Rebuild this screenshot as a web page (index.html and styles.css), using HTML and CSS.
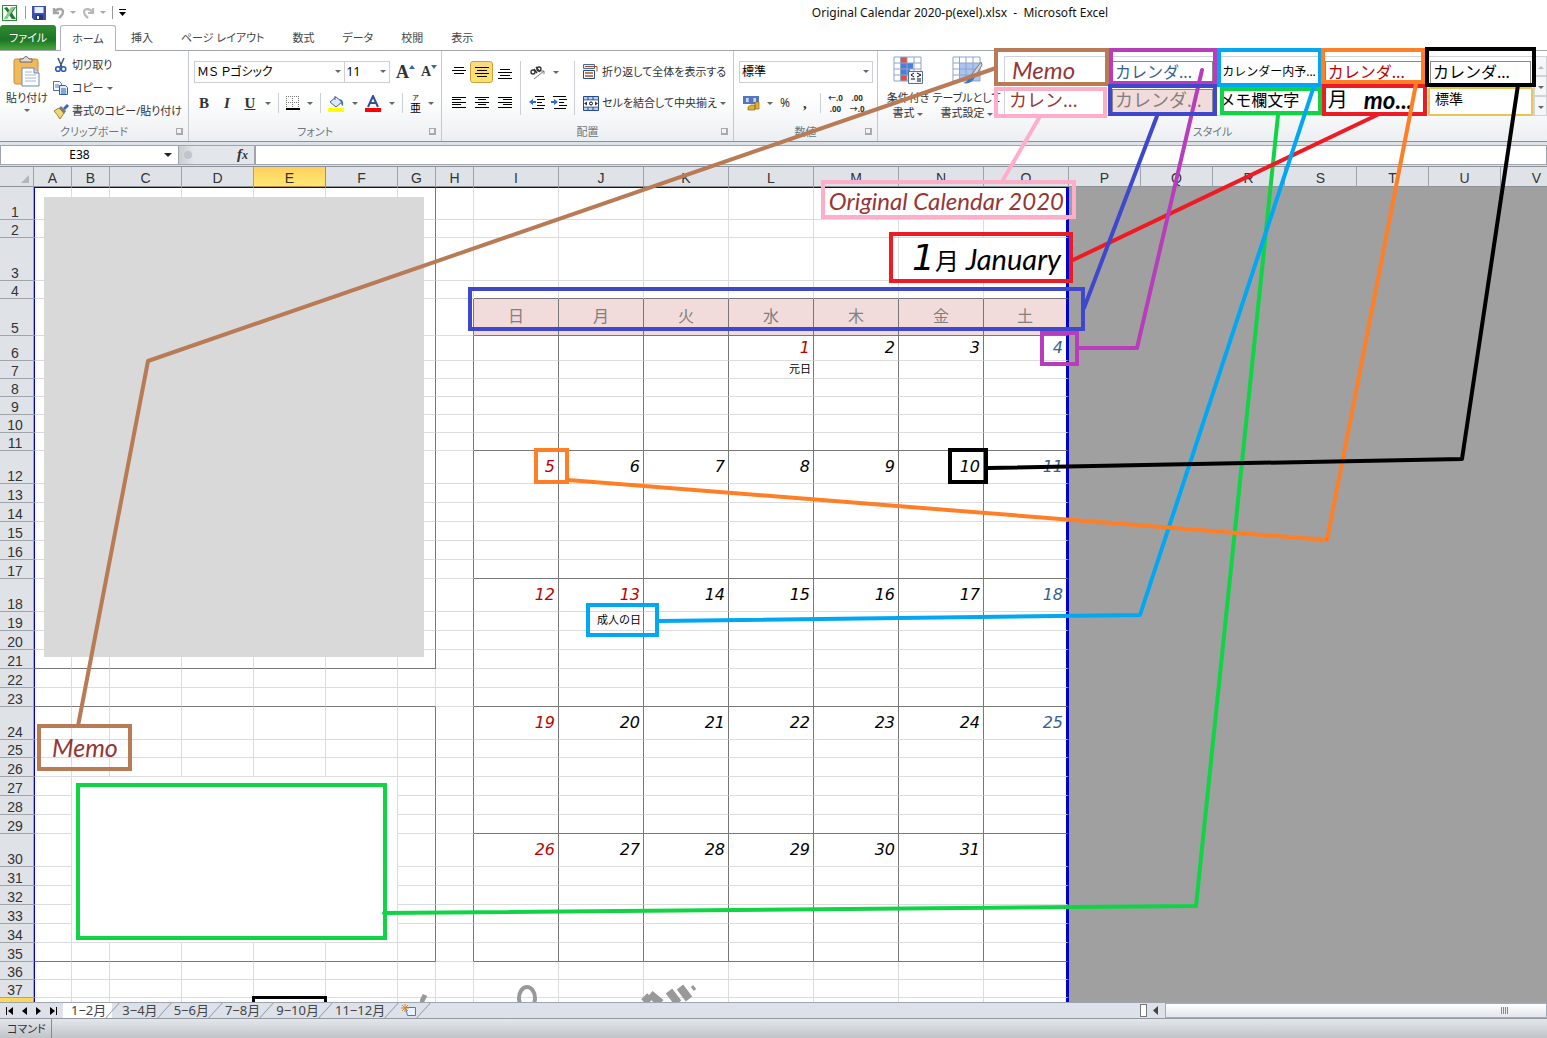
FILE: index.html
```html
<!DOCTYPE html>
<html lang="ja">
<head>
<meta charset="utf-8">
<title>Original Calendar 2020-p(exel).xlsx - Microsoft Excel</title>
<link rel="stylesheet" href="styles.css">
</head>
<body>
<header class="titlebar">
  <div class="quick">
    <svg width="18" height="18" viewBox="0 0 18 18"><rect x="1.500" y="1.500" width="14" height="15" fill="#fff" stroke="#2a8a38"/><path d="M3 4l3-1 3 4 3-4h3l-4 6 4 6h-4l-3-4-2 4H3l4-6z" fill="#217a32"/><path d="M10 3h4L6 15H3z" fill="#8cc98c"/></svg>
    <i class="vline"></i>
    <button class="bare" aria-label="上書き保存"><svg width="14" height="14" viewBox="0 0 14 14"><path d="M0 0h14v14H2l-2-2z" fill="#3c4fb0"/><path d="M2.500 1h9v6h-9z" fill="#e8f0ff"/><path d="M4 9h7v5H4z" fill="#29336f"/><path d="M5 10h2v3H5z" fill="#fff"/></svg></button>
    <button class="bare" aria-label="元に戻す"><svg width="13" height="12" viewBox="0 0 13 12"><path d="M2 1v5h5M2.500 5.500C5 1 11 1 11 5c0 3-2 4-4 6" fill="none" stroke="#a5a5a5" stroke-width="2.400"/></svg><b class="dn pale"></b></button>
    <button class="bare" aria-label="やり直し"><svg width="13" height="12" viewBox="0 0 13 12"><path d="M11 1v5H6M10.500 5.500C8 1 2 1 2 5c0 3 2 4 4 6" fill="none" stroke="#b8b8b8" stroke-width="2.200"/></svg><b class="dn pale"></b></button>
    <i class="vline"></i>
    <button class="bare" aria-label="カスタマイズ"><svg width="7" height="7" viewBox="0 0 7 7"><path d="M0 0h7v1H0zM0 3h7L3.500 7z"/></svg></button>
  </div>
  <h1>Original Calendar 2020-p(exel).xlsx&nbsp; -&nbsp; Microsoft Excel</h1>
</header>

<nav class="tabs">
  <button class="file">ファイル</button>
  <button class="active">ホーム</button>
  <button>挿入</button>
  <button>ページ レイアウト</button>
  <button>数式</button>
  <button>データ</button>
  <button>校閲</button>
  <button>表示</button>
</nav>

<main class="ribbon">
  <section class="group g-clip">
    <div class="body clip">
      <button class="bare big"><svg width="28" height="31" viewBox="0 0 28 31"><rect x="1" y="3" width="24" height="25" rx="2" fill="#f0b95c" stroke="#c98d35"/><path d="M7 6V3h3q3-5 6 0h3v3z" fill="#ddd" stroke="#666"/><path d="M9 12h12l5 5v13H9z" fill="#fff" stroke="#6d87ad"/><path d="M21 12v5h5" fill="#c9daf0" stroke="#6d87ad"/><path d="M12 16h7M12 19h11M12 22h11M12 25h11" stroke="#9db8dc"/></svg><span>貼り付け</span><b class="dn"></b></button>
      <div class="stack">
        <button class="bare"><svg width="16" height="16" viewBox="0 0 16 16"><path d="M5 1l4 9M11 1L7 10" stroke="#44556f" stroke-width="1.500"/><circle cx="5" cy="12" r="2.300" fill="none" stroke="#2b5bb8" stroke-width="1.600"/><circle cx="10.500" cy="12" r="2.300" fill="none" stroke="#2b5bb8" stroke-width="1.600"/></svg>切り取り</button>
        <button class="bare"><svg width="16" height="14" viewBox="0 0 16 14"><path d="M.5.5h6l2 2v7h-8z" fill="#fff" stroke="#4a73b0"/><path d="M2 4h4M2 6h4" stroke="#4a73b0"/><path d="M6.500 4.500h6l2 2v7h-8z" fill="#e3eeff" stroke="#2d5da8"/><path d="M8 8h5M8 10h5M8 12h5" stroke="#2d5da8"/></svg>コピー <b class="dn"></b></button>
        <button class="bare"><svg width="16" height="15" viewBox="0 0 16 15"><path d="M1 7l5-3 5 5-4 6q-3-5-6-8z" fill="#f1d877" stroke="#a0812b"/><path d="M6 4l2-2 5 5-2 3z" fill="#7b7b86"/><path d="M10 4l4-4 2 2-4 4z" fill="#3566b8"/></svg>書式のコピー/貼り付け</button>
      </div>
    </div>
    <footer>クリップボード<i class="launch"></i></footer>
  </section>

  <section class="group g-font">
    <div class="body">
      <div class="line">
        <span class="combo wide"><select aria-label="フォント名"><option>ＭＳ Ｐゴシック</option></select></span><span class="combo tiny"><select aria-label="サイズ"><option>11</option></select></span>
        <button class="bare serif s18">A<svg width="6" height="14" viewBox="0 0 6 14"><path d="M0 4h6L3 0z" fill="#3767b0"/></svg></button>
        <button class="bare serif s14">A<svg width="6" height="14" viewBox="0 0 6 14"><path d="M0 0h6L3 4z" fill="#3767b0"/></svg></button>
      </div>
      <div class="line l2">
        <button class="bare serif bold">B</button><button class="bare serif ital">I</button><button class="bare serif under">U</button><b class="dn"></b><i class="sep"></i>
        <button class="bare" aria-label="罫線"><svg width="14" height="14" viewBox="0 0 14 14"><path d="M.5 0v13M6.500 0v13M12.500 0v13M0 .5h13M0 6.500h13" stroke="#777" stroke-dasharray="1 1"/><path d="M0 13h14" stroke="#000" stroke-width="2"/></svg></button><b class="dn"></b><i class="sep"></i>
        <button class="bare" aria-label="塗りつぶし"><svg width="17" height="17" viewBox="0 0 17 17"><path d="M2 7l6-5 6 5-6 5z" fill="#dce8fa" stroke="#44618e"/><path d="M7 5V1" stroke="#44618e"/><path d="M11 4q5 0 4 7-2-1-2-4z" fill="#3a6fc0"/><path d="M0 13h16v4H0z" fill="#ff0"/></svg></button><b class="dn"></b>
        <button class="bare" aria-label="フォントの色"><svg width="17" height="17" viewBox="0 0 17 17"><path d="M3 12L8 1l5 11M5 8h6" fill="none" stroke="#31528f" stroke-width="2"/><path d="M0 13h16v4H0z" fill="red"/></svg></button><b class="dn"></b><i class="sep"></i>
        <button class="bare ruby"><small>ア</small><span>亜</span></button><b class="dn"></b>
      </div>
    </div>
    <footer>フォント<i class="launch"></i></footer>
  </section>

  <section class="group g-align">
    <div class="body cols">
      <div class="agrid">
        <button class="bare" aria-label="上揃え"><svg width="14" height="14"><path d="M0 .5h14M2 3.500h10M0 6.500h14M2 9.500h10" stroke="#000" transform="translate(0 -1)"/></svg></button>
        <button class="bare on" aria-label="上下中央揃え"><svg width="14" height="14"><path d="M0 3.500h14M2 6.500h10M0 9.500h14M2 12.500h10" stroke="#000" transform="translate(0 -1)"/></svg></button>
        <button class="bare" aria-label="下揃え"><svg width="14" height="14"><path d="M2 4.500h10M0 7.500h14M2 10.500h10M0 13.500h14" stroke="#000"/></svg></button>
        <button class="bare" aria-label="左揃え"><svg width="14" height="12"><path d="M0 .5h14M0 2.500h9M0 5.500h14M0 7.500h9M0 10.500h14" stroke="#000"/></svg></button>
        <button class="bare" aria-label="中央揃え"><svg width="14" height="12"><path d="M0 .5h14M3 2.500h8M0 5.500h14M3 7.500h8M0 10.500h14" stroke="#000"/></svg></button>
        <button class="bare" aria-label="右揃え"><svg width="14" height="12"><path d="M0 .5h14M5 2.500h9M0 5.500h14M5 7.500h9M0 10.500h14" stroke="#000"/></svg></button>
      </div>
      <i class="sep tall"></i>
      <div class="orient">
        <div><button class="bare" aria-label="方向"><svg width="18" height="16" viewBox="0 0 18 16"><g fill="none" stroke="#333" stroke-width="1.400"><circle cx="4" cy="8" r="2"/><path d="M5 5l3 4M7 3l4 5"/><circle cx="10" cy="5" r="2"/></g><path d="M5 15l10-8M12 7h3v3" fill="none" stroke="#777"/></svg></button><b class="dn"></b></div>
        <div><button class="bare" aria-label="インデント解除"><svg width="16" height="14"><path d="M6 .5h9M8 3.500h8M8 6.500h5M8 9.500h8M3 12.500h12" stroke="#000"/><path d="M0 6l4-3v2h3v2H4v2z" fill="#2f6bd0"/></svg></button><button class="bare" aria-label="インデント"><svg width="16" height="14"><path d="M2 .5h13M8 3.500h8M8 6.500h5M8 9.500h8M3 12.500h12" stroke="#000"/><path d="M7 6L3 3v2H0v2h3v2z" fill="#2f6bd0"/></svg></button></div>
      </div>
      <i class="sep tall"></i>
      <div class="wrapcol">
        <button class="bare"><svg width="16" height="16" viewBox="0 0 16 16"><path d="M.5.5h11v4H.5z" fill="#f7e5d2" stroke="#4869a0"/><path d="M2 2.500h12v5" fill="none" stroke="#8b5a2b"/><path d="M.5 6.500h11v8H.5z" fill="#fff" stroke="#27488a"/><path d="M2 9h8M2 12h8" stroke="#a5552a" stroke-width="1.500"/></svg>折り返して全体を表示する</button>
        <button class="bare"><svg width="16" height="15" viewBox="0 0 16 15"><path d="M.5.500h15v14H.500zM.5 4h15M.5 11h15M5 0v4M10 0v4M5 11v4M10 11v4" fill="#b9cfee" stroke="#27488a"/><path d="M1 4.500h14v6H1z" fill="#fff"/><path d="M1 7.500l3-2v4zM15 7.500l-3-2v4z" fill="#333"/><circle cx="8" cy="7.500" r="1.500" fill="none" stroke="#000"/></svg>セルを結合して中央揃え <b class="dn"></b></button>
      </div>
    </div>
    <footer>配置<i class="launch"></i></footer>
  </section>

  <section class="group g-num">
    <div class="body">
      <div class="line"><span class="combo full"><select aria-label="表示形式"><option>標準</option></select></span></div>
      <div class="line l2">
        <button class="bare" aria-label="通貨"><svg width="17" height="16" viewBox="0 0 17 16"><path d="M0 1h16v8H0z" fill="#5476bd"/><path d="M3 3h10v4H3z" fill="#c9d8f5"/><ellipse cx="8" cy="5" rx="2.500" ry="3" fill="#5476bd"/><path d="M8 10h4v5H5v-3zM12 7h4v7h-4z" fill="#e3af32" stroke="#94691a" stroke-width=".7"/></svg></button><b class="dn"></b>
        <button class="bare pct">%</button><button class="bare serif comma">,</button><i class="sep"></i>
        <button class="bare dec">←.0<br>.00</button><button class="bare dec">.00<br>→.0</button>
      </div>
    </div>
    <footer>数値<i class="launch"></i></footer>
  </section>

  <section class="group g-style">
    <div class="body styles">
      <button class="bare big cond"><svg width="31" height="29" viewBox="0 0 31 29"><path d="M1 1h27v24H1z" fill="#fff"/><path d="M7 1h7v6H7zM7 19h7v6H7z" fill="#e8503e"/><path d="M7 7h13v6H7zM7 13h10v6H7z" fill="#4a7fdc"/><path d="M1 1h27v24H1zM1 7h27M1 13h27M1 19h27M7.500 1v24M14 1v24M21 1v24" fill="none" stroke="#8fa3c8"/><path d="M15.500 15.500h14v12h-14z" fill="#f3f6fb" stroke="#55709c"/><path d="M21 17l-3 2 3 2M18 23h4M24 17l4 2-4 2M24 25h4M24 23h4" fill="none" stroke="#111"/></svg><span>条件付き<br>書式 <b class="dn"></b></span></button>
      <button class="bare big tbl"><svg width="31" height="29" viewBox="0 0 31 29"><path d="M1 1h27v24H1z" fill="#fff"/><path d="M7 7h21v18H7z" fill="#a9c5f2"/><path d="M1 1h27v24H1zM1 7h27M1 13h27M1 19h27M7.500 1v24M14 1v24M21 1v24" fill="none" stroke="#8fa3c8"/><path d="M29 6l-9 12 3 3 7-12z" fill="#d3d8df" stroke="#777"/><path d="M20 18l3 3q-4 8-12 6 5-1 5-5 1-3 4-4z" fill="#3c74c4"/></svg><span>テーブルとして<br>書式設定 <b class="dn"></b></span></button>
      <div class="gallery">
        <button class="hand wine">Memo</button><button class="steel boxed s16">カレンダ...</button><button class="s12">カレンダー内予...</button><button class="red boxed s16">カレンダ...</button><button class="boxed s16">カレンダ...</button>
        <button class="wine s18">カレン...</button><button class="pinkcell boxed s18">カレンダ...</button><button class="s16">メモ欄文字</button><button class="month"><span>月</span><em>mo...</em></button><button class="picked s14">標準</button>
      </div>
      <div class="gscroll"><button aria-label="上へ"><b class="up"></b></button><button aria-label="下へ"><b class="dn"></b></button><button aria-label="その他"><b class="dn"></b></button></div>
    </div>
    <footer>スタイル</footer>
  </section>
</main>

<div class="formula">
  <input class="namebox" aria-label="名前ボックス" value="E38">
  <b class="dn dark"></b>
  <div class="fx"><i></i><em>f<small>x</small></em></div>
  <input class="expr" aria-label="数式バー">
</div>

<div class="sheet">
  <table id="grid"></table>
  <div class="photo"></div>
  <div class="memo">Memo</div>
  <div class="cursor"></div>
  <svg class="mark" width="300" height="20" viewBox="0 0 300 20"><g fill="none" stroke="#999"><ellipse cx="107" cy="14" rx="8" ry="11" stroke-width="4"/><path d="M224 18l6-6M230 10l11 9" stroke-width="8"/><path d="M249 7l9 12M260 3l9 12" stroke-width="8"/><path d="M272 2l3 4" stroke-width="3"/><path d="M1 19l4-8" stroke-width="5"/></g></svg>
</div>

<nav class="sheetbar">
  <div class="nav">
    <button class="bare" aria-label="先頭"><svg width="7" height="8"><path d="M0 0h1v8H0zM7 0v8L2 4z"/></svg></button>
    <button class="bare" aria-label="前"><svg width="5" height="8"><path d="M5 0v8L0 4z"/></svg></button>
    <button class="bare" aria-label="次"><svg width="5" height="8"><path d="M0 0v8l5-4z"/></svg></button>
    <button class="bare" aria-label="末尾"><svg width="7" height="8"><path d="M6 0h1v8H6zM0 0v8l5-4z"/></svg></button>
  </div>
  <button class="st current">1−2月</button><button class="st">3−4月</button><button class="st">5−6月</button><button class="st">7−8月</button><button class="st">9−10月</button><button class="st">11−12月</button>
  <button class="st" aria-label="ワークシートの挿入"><svg width="16" height="13" viewBox="0 0 16 13"><path d="M4.500 3.500h10v8h-8z" fill="#eaf1ff" stroke="#5577b5"/><path d="M4 0v8M0 4h8M1 1l6 6M7 1L1 7" stroke="#d38a26"/></svg></button>
  <span class="endline"></span>
  <div class="hscroll"><i class="split"></i><button class="bare" aria-label="左へ"><svg width="5" height="9"><path d="M5 0v9L0 4.500z" fill="#444"/></svg></button><div class="thumb"><i></i></div></div>
</nav>
<footer class="status"><span>コマンド</span></footer>

<svg class="notes" width="1547" height="1038" viewBox="0 0 1547 1038">
  <g class="green"><path d="M1278 115L1196 906L384 913"/><rect x="1222" y="89" width="98" height="24"/><rect x="78" y="785" width="307" height="153"/></g>
  <g class="brown"><path d="M996 68L148 361L78 726"/><rect x="996" y="50" width="111" height="34"/><rect x="39" y="726" width="91" height="43"/></g>
  <g class="pink"><path d="M1039 118L1003 180"/><rect x="996" y="89" width="109" height="27"/><rect x="823" y="182" width="251" height="35"/></g>
  <g class="crimson"><path d="M1377 115L1073 260"/><rect x="1324" y="86" width="101" height="28"/><rect x="891" y="234" width="180" height="47"/></g>
  <g class="cyan"><path d="M1314 86L1140 615L659 621"/><rect x="1219" y="50" width="101" height="35"/><rect x="588" y="605" width="69" height="30"/></g>
  <g class="purple"><path d="M1202 70L1137 348H1079"/><rect x="1111" y="50" width="104" height="33"/><rect x="1042" y="333" width="35" height="31"/></g>
  <g class="blue"><path d="M1157 116L1084 308"/><rect x="1110" y="86" width="105" height="28"/><rect x="470" y="289" width="613" height="40"/></g>
  <g class="orange"><path d="M1416 84L1327 540L568 480"/><rect x="1323" y="50" width="100" height="32"/><rect x="536" y="450" width="31" height="32"/></g>
  <g class="black"><path d="M1518 85L1462 459L988 468"/><rect x="1427" y="49" width="107" height="36"/><rect x="950" y="450" width="36" height="32"/></g>
</svg>
<script src="script.js"></script>
</body>
</html>
```
FILE: styles.css
```css
* { box-sizing: border-box; }
body {
  margin: 0; min-height: 100vh; display: flex; flex-direction: column; position: relative;
  height: 100vh; overflow: hidden; background: #fff; color: #333;
  font: 12px/16px "Noto Sans", "Noto Sans CJK JP", sans-serif;
}
button, input, select { font: inherit; color: inherit; }
button { font-feature-settings: "palt"; white-space: nowrap; }
.bare { border: 0; padding: 0; background: none; display: inline-flex; align-items: center; gap: 3px; }
svg { display: block; flex: none; }

.dn, .up { display: inline-block; width: 0; height: 0; border: 3px solid transparent; border-top-color: #666; border-bottom-width: 0; flex: none; vertical-align: middle; }
.up { border-top-width: 0; border-bottom: 3px solid #bbb; }
.dn.pale { border-top-color: #aaa; }
.dn.dark { border-top-color: #222; border-width: 4px 4px 0; }

/* title bar */
.titlebar { flex: none; height: 25px; display: flex; align-items: center; }
.quick { width: 130px; display: flex; align-items: center; gap: 6px; padding-left: 1px; flex: none; }
.quick .bare { gap: 5px; }
.vline { flex: none; width: 1px; height: 13px; background: #999; }
.titlebar h1 { flex: 1; margin: 0; padding-left: 243px; text-align: center; font-size: 12px; font-weight: 400; color: #111; }

/* ribbon tabs */
.tabs { flex: none; height: 26px; display: flex; border-bottom: 1px solid #a3a7ad; font-size: 11px; }
.tabs button { border: 0; background: none; padding: 0 12px; margin: 0 3px 0 1px; color: #444; }
.tabs .file { width: 56px; margin: 0 4px 0 0; padding: 0; background: linear-gradient(#2f8a33, #1f7426 60%, #49a83a); color: #fff; border-radius: 3px 3px 0 0; }
.tabs .active { height: 26px; width: 56px; margin: 0 2px 0 0; padding: 0; background: #fff; border: 1px solid #b0b4ba; border-bottom: 0; border-radius: 3px 3px 0 0; }

/* ribbon */
.ribbon { flex: none; height: 91px; display: flex; background: linear-gradient(#fff 50%, #eceff2); border-bottom: 1px solid #8c9199; font-size: 11px; }
.group { display: flex; flex-direction: column; flex: none; border-right: 1px solid #c4c8cd; }
.group .body { flex: 1; padding: 10px 4px 0 5px; min-width: 0; min-height: 0; }
.group footer { flex: none; height: 19px; line-height: 19px; text-align: center; color: #70757c; position: relative; font-feature-settings: "palt"; }
.g-clip { width: 189px; }
.g-font { width: 253px; }
.g-align { width: 292px; }
.g-num { width: 144px; }
.g-style { flex: 1; border: 0; min-width: 0; }
.launch { position: absolute; right: 5px; top: 6px; width: 7px; height: 7px; border: 1px solid #aaa; border-right-width: 2px; border-bottom-width: 2px; }
.sep { flex: none; width: 1px; height: 20px; background: #ccd0d6; }
.sep.tall { height: 54px; }

.group .clip { display: flex; padding-top: 5px; gap: 4px; }
.big { flex-direction: column; text-align: center; gap: 3px; }
.clip .big { width: 44px; height: 64px; }
.stack { display: flex; flex-direction: column; gap: 7px; padding-top: 1px; }
.stack .bare { height: 16px; }

.line { display: flex; align-items: center; height: 22px; gap: 6px; }
.l2 { margin-top: 9px; gap: 8px; padding-left: 4px; }
.combo { position: relative; height: 22px; display: inline-flex; font-size: 12px; }
.combo::after { content: ""; position: absolute; right: 4px; top: 9px; border: 3px solid transparent; border-top-color: #666; border-bottom: 0; }
.combo select { appearance: none; width: 100%; height: 22px; border: 1px solid #ccd0d5; background: #fff; padding: 0 2px; border-radius: 0; color: #000; font-feature-settings: "palt"; }
.combo.wide { width: 153px; }
.combo.tiny { width: 47px; margin-left: -7px; }
.combo.full { width: 134px; }
.serif { font-family: "Liberation Serif", serif; font-weight: 700; gap: 0; color: #333; }
.s12 { font-size: 12px; } .s14 { font-size: 14px; } .s16 { font-size: 16px; } .s18 { font-size: 18px; }
.l2 .serif { font-size: 15px; width: 16px; justify-content: center; }
.ital { font-style: italic; }
.under { text-decoration: underline; }
.ruby { flex-direction: column; gap: 0; color: #000; }
.ruby small { font-size: 7px; line-height: 9px; }
.ruby span { line-height: 12px; }
.g-font .l2 { gap: 7px; padding-left: 2px; }
.pct { font-size: 12px; }
.g-num .l2 { gap: 7px; }
.dec { font-size: 8px; line-height: 11px; font-weight: 700; display: block; }

.cols { display: flex; }
.agrid { display: grid; grid-template-columns: repeat(3, 23px); grid-auto-rows: 22px; row-gap: 9px; width: 73px; }
.agrid .bare { justify-content: center; }
.agrid .on { background: linear-gradient(#fbd97d, #ffe26a); border: 1px solid #c9a23f; border-radius: 3px; }
.orient { width: 53px; display: grid; grid-auto-rows: 22px; row-gap: 9px; padding-left: 8px; }
.orient div { display: flex; align-items: center; gap: 6px; }
.wrapcol { display: grid; grid-auto-rows: 22px; row-gap: 9px; padding-left: 8px; }

.group .styles { display: flex; padding: 5px 0 0 8px; }
.styles .big { width: 44px; height: 66px; line-height: 15px; gap: 5px; }
.styles .tbl { width: 74px; }
.gallery { flex: 1; display: grid; grid-template-columns: repeat(5, 1fr); grid-template-rows: 30px 29px; border: 1px solid #d0d3d8; height: 60px; background: #fff; min-width: 0; }
.gallery button { margin: 2px; border: 0; background: #fff; text-align: left; padding: 0 5px; color: #000; line-height: 20px; font-feature-settings: normal; }
.gallery .boxed { border: 1px solid #888; margin-top: 4px; }
.gallery .hand { margin: 0; padding: 0 7px 4px; font: italic 24px/24px Lato, sans-serif; }
.gallery .wine { color: #963634; }
.gallery .steel { color: #366092; }
.gallery .red { color: #c00000; }
.gallery .pinkcell { background: #f2dcdb; color: #808080; padding: 0; margin-top: 2px; }
.gallery .s16, .gallery .s18 { padding: 0 2px 4px; }
.gallery .month { font-size: 20px; line-height: 24px; margin: 0; padding: 0 5px 4px; display: flex; gap: 16px; align-items: center; }
.gallery .month em { font: italic 700 24px/24px Lato, sans-serif; }
.gallery .picked { border: 2px solid #e8c558; border-radius: 2px; margin: 0; padding-bottom: 5px; }
.gscroll { width: 13px; display: grid; grid-template-rows: repeat(3, 20px); }
.gscroll button { border: 1px solid #d0d3d8; background: #f5f6f8; padding: 0; line-height: 10px; }

/* formula bar */
.formula { flex: none; height: 25px; padding: 3px 0 2px; display: flex; align-items: center; background: #dde1e8; border-bottom: 1px solid #8c9199; }
.formula input { height: 20px; border: 1px solid #a0a5ad; background: #fff; outline: 0; }
.namebox { width: 179px; text-align: center; padding: 0 20px 0 0; color: #000; }
.formula .dn { margin-left: -15px; }
.fx { width: 76px; height: 20px; margin-left: 7px; padding: 0 6px 0 5px; display: flex; justify-content: space-between; align-items: center; background: linear-gradient(90deg, #c9cdd3, #e3e6ea 20%); border: 1px solid #a0a5ad; border-left: 0; }
.fx i { width: 8px; height: 8px; border-radius: 4px; background: #c1c5ca; }
.fx em { font: italic 700 15px "Liberation Serif", serif; }
.fx small { font-size: 12px; }
.expr { flex: 1; min-width: 0; }

/* worksheet */
.sheet { flex: 1; min-height: 0; overflow: hidden; position: relative; background: #a0a0a0; }
table { table-layout: fixed; border-collapse: separate; border-spacing: 0; width: 100%; min-width: 1573px; }
td, th { padding: 0; overflow: hidden; white-space: nowrap; font-weight: 400; }
th { background: #dfe3e8; color: #333; font: 14px/14px "Liberation Sans", sans-serif; border-right: 1px solid #9fa4ab; border-bottom: 1px solid #9fa4ab; }
thead th { height: 20px; border-bottom-color: #8e939a; line-height: 15px; padding-top: 4px; }
thead th.sel { background: linear-gradient(#ffd05c, #ffe873); border-color: #c08a3c; }
tbody th { vertical-align: bottom; padding-right: 3px; }
tbody th.sel { background: #ffd75c; }
.corner::after { content: ""; display: block; margin: 1px 4px 0 auto; width: 0; border: 4px solid transparent; border-bottom-color: #b3b7bd; border-right-color: #b3b7bd; }
td { background: #fff; border-right: 1px solid #dadcdd; border-bottom: 1px solid #dadcdd; }
td.out { background: #a0a0a0; border: 0; }
td.kr { border-right-color: #777; }
td.kb { border-bottom-color: #777; }
td.edge { border-right: 3px solid #0000c8; }
td.left { border-left: 1px solid #0000c8; }
td.top { border-top: 1px solid #0000c8; }
td.week { background: #f2dcdb; color: #808080; font-size: 16px; text-align: center; line-height: 20px; padding-bottom: 3px; }
td.date { font: italic 16px/20px "DejaVu Sans", sans-serif; color: #000; text-align: right; padding-right: 3px; }
td.date.sun { color: #c00000; }
td.date.sat { color: #366092; }
td.note { text-align: right; color: #000; font-size: 11px; line-height: 14px; padding: 0 2px 2px 0; }
td.title { font: italic 24px/26px Lato, sans-serif; color: #963634; text-align: right; padding: 0 2px 5px 0; }
td.mon { font: italic 29px/34px Lato, "Noto Sans CJK JP", sans-serif; color: #000; text-align: right; padding: 0 5px 0 0; }
td.mon b { font: italic 36px/0 "DejaVu Sans", sans-serif; }
td.mon span { font-style: normal; font-size: 24px; line-height: 0; }
.photo { position: absolute; left: 44px; top: 30px; width: 380px; height: 460px; background: #d9d9d9; }
.memo { position: absolute; left: 52px; top: 566px; font: italic 25px/28px Lato, sans-serif; color: #963634; }
.cursor { position: absolute; left: 252px; top: 829px; width: 75px; height: 24px; border: 3px solid #000; }
.mark { position: absolute; left: 420px; top: 817px; }

/* sheet tabs and status */
.sheetbar { flex: none; height: 17px; display: flex; background: #dde1e9; border-top: 1px solid #9fa5ae; border-bottom: 1px solid #9298a2; }
.nav { width: 63px; display: flex; align-items: center; justify-content: space-between; padding: 0 6px; }
.st { border: 0; background: none; height: 15px; padding: 0 6px 1px 10px; font-size: 13px; line-height: 13px; position: relative; color: #444; }
.st::before, .endline::before { content: ""; position: absolute; left: 0; top: 0; height: 15px; border-left: 1px solid #8f959e; transform: skewX(-42deg); }
.st.current { background: #fff; padding-left: 8px; }
.st.current::before { display: none; }
.endline { position: relative; }
.hscroll { margin-left: auto; width: 407px; display: flex; align-items: center; }
.split { width: 7px; height: 13px; border: 1px solid #777; background: #fff; margin-right: 6px; }
.thumb { flex: 1; margin-left: 7px; height: 15px; border: 1px solid #a5abb5; background: linear-gradient(#fff, #e2e5ea); display: flex; align-items: center; justify-content: flex-end; padding-right: 37px; }
.thumb i { width: 8px; height: 7px; background: repeating-linear-gradient(90deg, #888 0 1px, #eee 1px 2px); }
.status { flex: none; height: 19px; background: linear-gradient(#e3e6ea, #c1c5ca); font-feature-settings: "palt"; }
.status span { display: inline-block; height: 19px; line-height: 19px; padding: 0 5px 0 7px; border-right: 1px solid #888; font-size: 11px; }

/* callouts drawn over the window */
.notes { position: absolute; left: 0; top: 0; pointer-events: none; fill: none; stroke-width: 4; }
.notes path { stroke-linecap: round; stroke-linejoin: round; }
.green { stroke: #10d445; } .brown { stroke: #b97a56; } .pink { stroke: #ffaec9; }
.crimson { stroke: #ed1c24; } .cyan { stroke: #00a8f3; } .purple { stroke: #b83dba; }
.blue { stroke: #3f48cc; } .orange { stroke: #ff7f27; } .black { stroke: #000; }
```
FILE: script.js
```js
// Builds the worksheet: column widths, row heights and the January block.
const widths = [38, 38, 72, 72, 72, 72, 38, 38, 85, 85, 85, 85, 85, 85, 85, 72, 72, 72, 72, 72, 72, 0];
const heights = [33, 18, 43, 18, 37, 25, 18, 18, 18, 18, 18];
heights.push(33, 19, 19, 19, 19, 19, 33, 19, 19, 19, 19, 19, 33, 18, 19, 19, 19, 19, 33, 19, 19, 19, 19, 19, 18, 18, 18);
const weekTop = [6, 12, 18, 24, 30];
const days = '日月火水木金土';
const ruled = [4, 5, 11, 17, 23, 29, 35];
const grid = document.getElementById('grid');

let html = '<colgroup><col style="width:34px">';
widths.forEach(w => { html += w ? `<col style="width:${w}px">` : '<col>'; });
html += '</colgroup><thead><tr><th class="corner"></th>';
widths.forEach((w, c) => {
  const name = String.fromCharCode(65 + c);
  html += `<th class="${name === 'E' ? 'sel' : ''}">${name}</th>`;
});
html += '</tr></thead><tbody>';

heights.forEach((h, i) => {
  const r = i + 1;
  html += `<tr style="height:${h}px"><th class="${r === 38 ? 'sel' : ''}">${r < 38 ? r : ''}</th>`;
  for (let c = 0; c < widths.length; c++) {
    if (r > 27 && r < 35 && c > 0 && c < 6) continue;
    const cls = [];
    let text = '', span = '';
    if (c > 14) cls.push('out');
    if (r === 1 && c < 15) cls.push('top');
    if (c === 0) cls.push('left');
    if (c === 6 && (r < 22 || (r > 23 && r < 36))) cls.push('kr');
    if (c < 7 && [21, 23, 35].includes(r)) cls.push('kb');
    if (c > 7 && c < 15 && ruled.includes(r)) cls.push('kb');
    if (c > 6 && c < 14 && r > 4 && r < 36) cls.push('kr');
    if (r === 27 && c === 1) span = ' colspan="5" rowspan="8"';
    if (c > 7 && c < 15) {
      if (r === 5) { cls.push('week'); text = days[c - 8]; }
      const week = weekTop.indexOf(r);
      if (week >= 0) {
        const d = week * 7 + c - 8 - 2;
        if (d > 0 && d < 32) {
          cls.push('date');
          text = d;
          if (c === 8 || d === 1 || d === 13) cls.push('sun');
          if (c === 14) cls.push('sat');
        }
      }
    }
    if (r === 7 && c === 11) { cls.push('note'); text = '元日'; }
    if (r === 19 && c === 9) { cls.push('note'); text = '成人の日'; }
    if (r === 1 && c === 12) { cls.push('title'); span = ' colspan="3"'; text = 'Original Calendar 2020'; }
    if (r === 3 && c === 13) { cls.push('mon'); span = ' colspan="2"'; text = '<b>1</b><span>月</span> January'; }
    if (c === 14 || (r === 1 && c === 12) || (r === 3 && c === 13)) cls.push('edge');
    html += `<td class="${cls.join(' ')}"${span}>${text}</td>`;
    if (r === 27 && c === 1) c = 5;
    if (r === 1 && c === 12) c = 14;
    if (r === 3 && c === 13) c = 14;
  }
  html += '</tr>';
});
grid.innerHTML = html + '</tbody>';
```
